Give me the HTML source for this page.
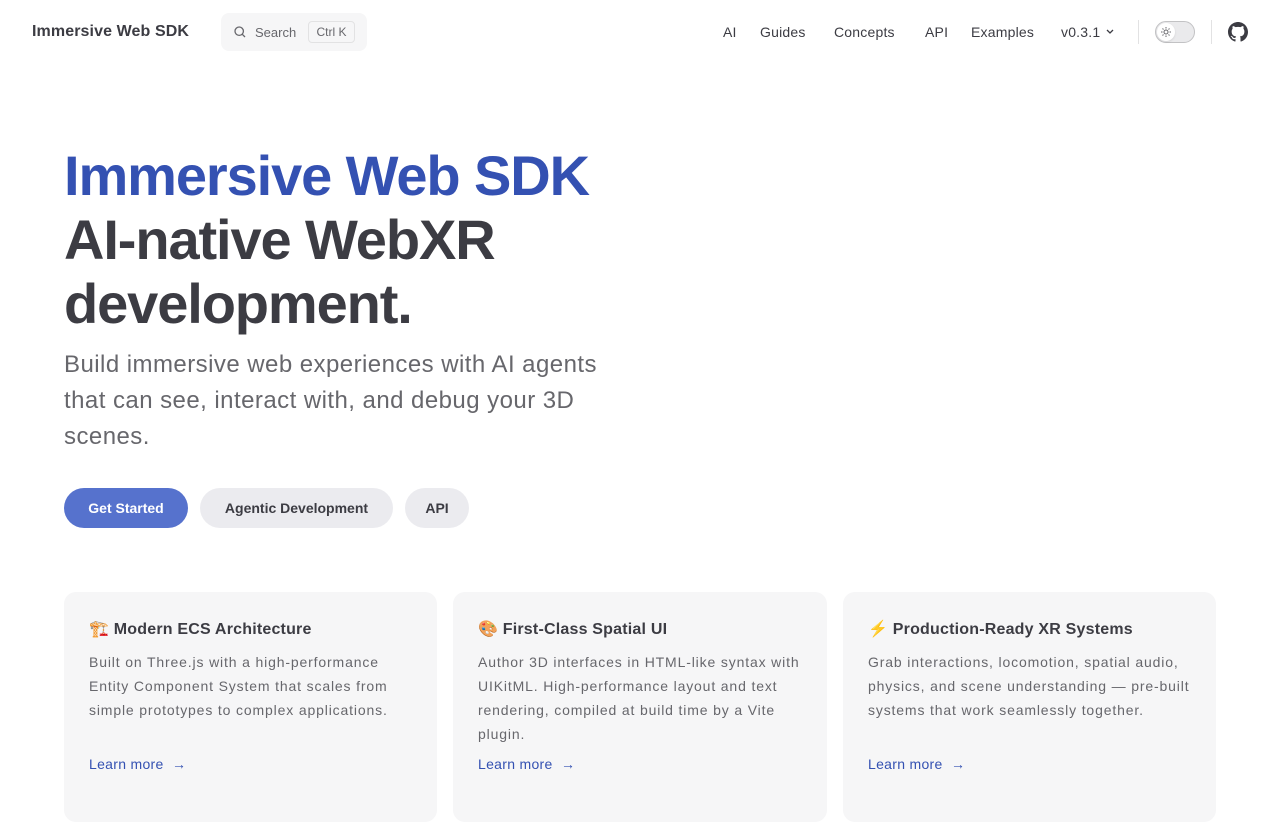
<!DOCTYPE html>
<html><head><meta charset="utf-8"><style>
*{box-sizing:border-box;margin:0;padding:0}
body{width:1280px;height:800px;overflow:hidden;background:#fff;font-family:"Liberation Sans",sans-serif;color:#3c3c43}
.nav{position:absolute;top:0;left:0;width:1280px;height:64px}
.logo{position:absolute;left:32px;top:23px;font-size:16px;font-weight:600;color:#3c3c43;letter-spacing:0.1px}
.search{position:absolute;left:221px;top:13px;width:146px;height:38px;background:#f6f6f7;border-radius:8px}
.search .t{position:absolute;left:34px;top:12px;font-size:13px;color:#67676c}
.search .k{position:absolute;left:87px;top:8px;width:47px;height:22px;border:1px solid #e2e2e3;border-radius:4px;font-size:12px;text-align:center;line-height:20px;color:#67676c}
.links{position:absolute;top:24px;font-size:14px;font-weight:500;color:#3c3c43;letter-spacing:0.2px}
.links span{position:absolute;white-space:nowrap}
.div{position:absolute;top:20px;width:1px;height:24px;background:#e2e2e3}
.sw{position:absolute;left:1155px;top:21px;width:40px;height:22px;border:1px solid #c2c2c4;border-radius:11px;background:#eaeaec}
.sw i{position:absolute;left:1px;top:1px;width:18px;height:18px;border-radius:50%;background:#fff;box-shadow:0 1px 2px rgba(0,0,0,.1)}
h1{position:absolute;left:64px;top:144px;font-size:56px;line-height:64px;font-weight:700;letter-spacing:-1.1px;width:640px}
h1 .n{color:#3451b2}
.tag{position:absolute;left:64px;top:347px;width:560px;font-size:24px;line-height:36px;color:#67676c;letter-spacing:0.45px}
.btn{position:absolute;top:488px;height:40px;border-radius:20px;font-size:14px;font-weight:600;line-height:40px;text-align:center}
.card{position:absolute;top:592px;width:373px;height:230px;background:#f6f6f7;border-radius:12px;padding:25px 24px 25px 25px}
.card h2{font-size:16px;font-weight:600;line-height:24px;color:#3c3c43;margin-top:1px;letter-spacing:0.2px}
.card p{font-size:14px;line-height:24px;color:#67676c;margin-top:8px;font-weight:500;letter-spacing:0.85px;width:328px}
.card a{position:absolute;left:25px;top:164px;font-size:14px;font-weight:500;color:#3451b2;text-decoration:none;letter-spacing:0.3px}
</style></head><body>
<div class="nav">
<div class="logo">Immersive Web SDK</div>
<div class="search"><svg style="position:absolute;left:13px;top:13px" width="12" height="12" viewBox="0 0 12 12" fill="none" stroke="#67676c" stroke-width="1.3"><circle cx="5.2" cy="5.2" r="4.2"/><path d="M8.3 8.3L11 11"/></svg><span class="t">Search</span><span class="k">Ctrl K</span></div>
<div class="links"><span style="left:723px">AI</span><span style="left:760px">Guides</span><span style="left:834px">Concepts</span><span style="left:925px">API</span><span style="left:971px">Examples</span><span style="left:1061px">v0.3.1</span></div>
<svg style="position:absolute;left:1105px;top:28px" width="10" height="8" viewBox="0 0 10 8" fill="none" stroke="#3c3c43" stroke-width="1.3"><path d="M2 2l3 3 3-3"/></svg>
<div class="div" style="left:1138px"></div>
<div class="sw"><i><svg width="18" height="18" viewBox="0 0 18 18" fill="none" stroke="#67676c" stroke-width="1"><circle cx="9" cy="9" r="2"/><path d="M9 4v1.5M9 12.5V14M4 9h1.5M12.5 9H14M5.5 5.5l1 1M11.5 11.5l1 1M5.5 12.5l1-1M11.5 6.5l1-1"/></svg></i></div>
<div class="div" style="left:1211px"></div>
<svg style="position:absolute;left:1228px;top:22px" width="20" height="20" viewBox="0 0 16 16" fill="#3c3c43"><path d="M8 0C3.58 0 0 3.58 0 8c0 3.54 2.29 6.53 5.47 7.59.4.07.55-.17.55-.38 0-.19-.01-.82-.01-1.49-2.01.37-2.53-.49-2.69-.94-.09-.23-.48-.94-.82-1.13-.28-.15-.68-.52-.01-.53.63-.01 1.08.58 1.23.82.72 1.21 1.87.87 2.33.66.07-.52.28-.87.51-1.07-1.78-.2-3.64-.89-3.64-3.95 0-.87.31-1.59.82-2.15-.08-.2-.36-1.02.08-2.12 0 0 .67-.21 2.2.82.64-.18 1.32-.27 2-.27.68 0 1.36.09 2 .27 1.53-1.04 2.2-.82 2.2-.82.44 1.1.16 1.92.08 2.12.51.56.82 1.27.82 2.15 0 3.07-1.87 3.75-3.65 3.95.29.25.54.73.54 1.48 0 1.07-.01 1.93-.01 2.2 0 .21.15.46.55.38A8.013 8.013 0 0016 8c0-4.42-3.58-8-8-8z"/></svg>
</div>
<h1><span class="n">Immersive Web SDK</span><br>AI-native WebXR<br>development.</h1>
<div class="tag">Build immersive web experiences with AI agents that can see, interact with, and debug your 3D scenes.</div>
<div class="btn" style="left:64px;width:124px;background:#5672cd;color:#fff">Get Started</div>
<div class="btn" style="left:200px;width:193px;background:#ebebef;color:#3c3c43">Agentic Development</div>
<div class="btn" style="left:405px;width:64px;background:#ebebef;color:#3c3c43">API</div>
<div class="card" style="left:64px"><h2>🏗️ Modern ECS Architecture</h2><p>Built on Three.js with a high-performance Entity Component System that scales from simple prototypes to complex applications.</p><a>Learn more &nbsp;→</a></div>
<div class="card" style="left:453px;width:374px"><h2>🎨 First-Class Spatial UI</h2><p>Author 3D interfaces in HTML-like syntax with UIKitML. High-performance layout and text rendering, compiled at build time by a Vite plugin.</p><a>Learn more &nbsp;→</a></div>
<div class="card" style="left:843px"><h2>⚡ Production-Ready XR Systems</h2><p>Grab interactions, locomotion, spatial audio, physics, and scene understanding — pre-built systems that work seamlessly together.</p><a>Learn more &nbsp;→</a></div>
</body></html>
